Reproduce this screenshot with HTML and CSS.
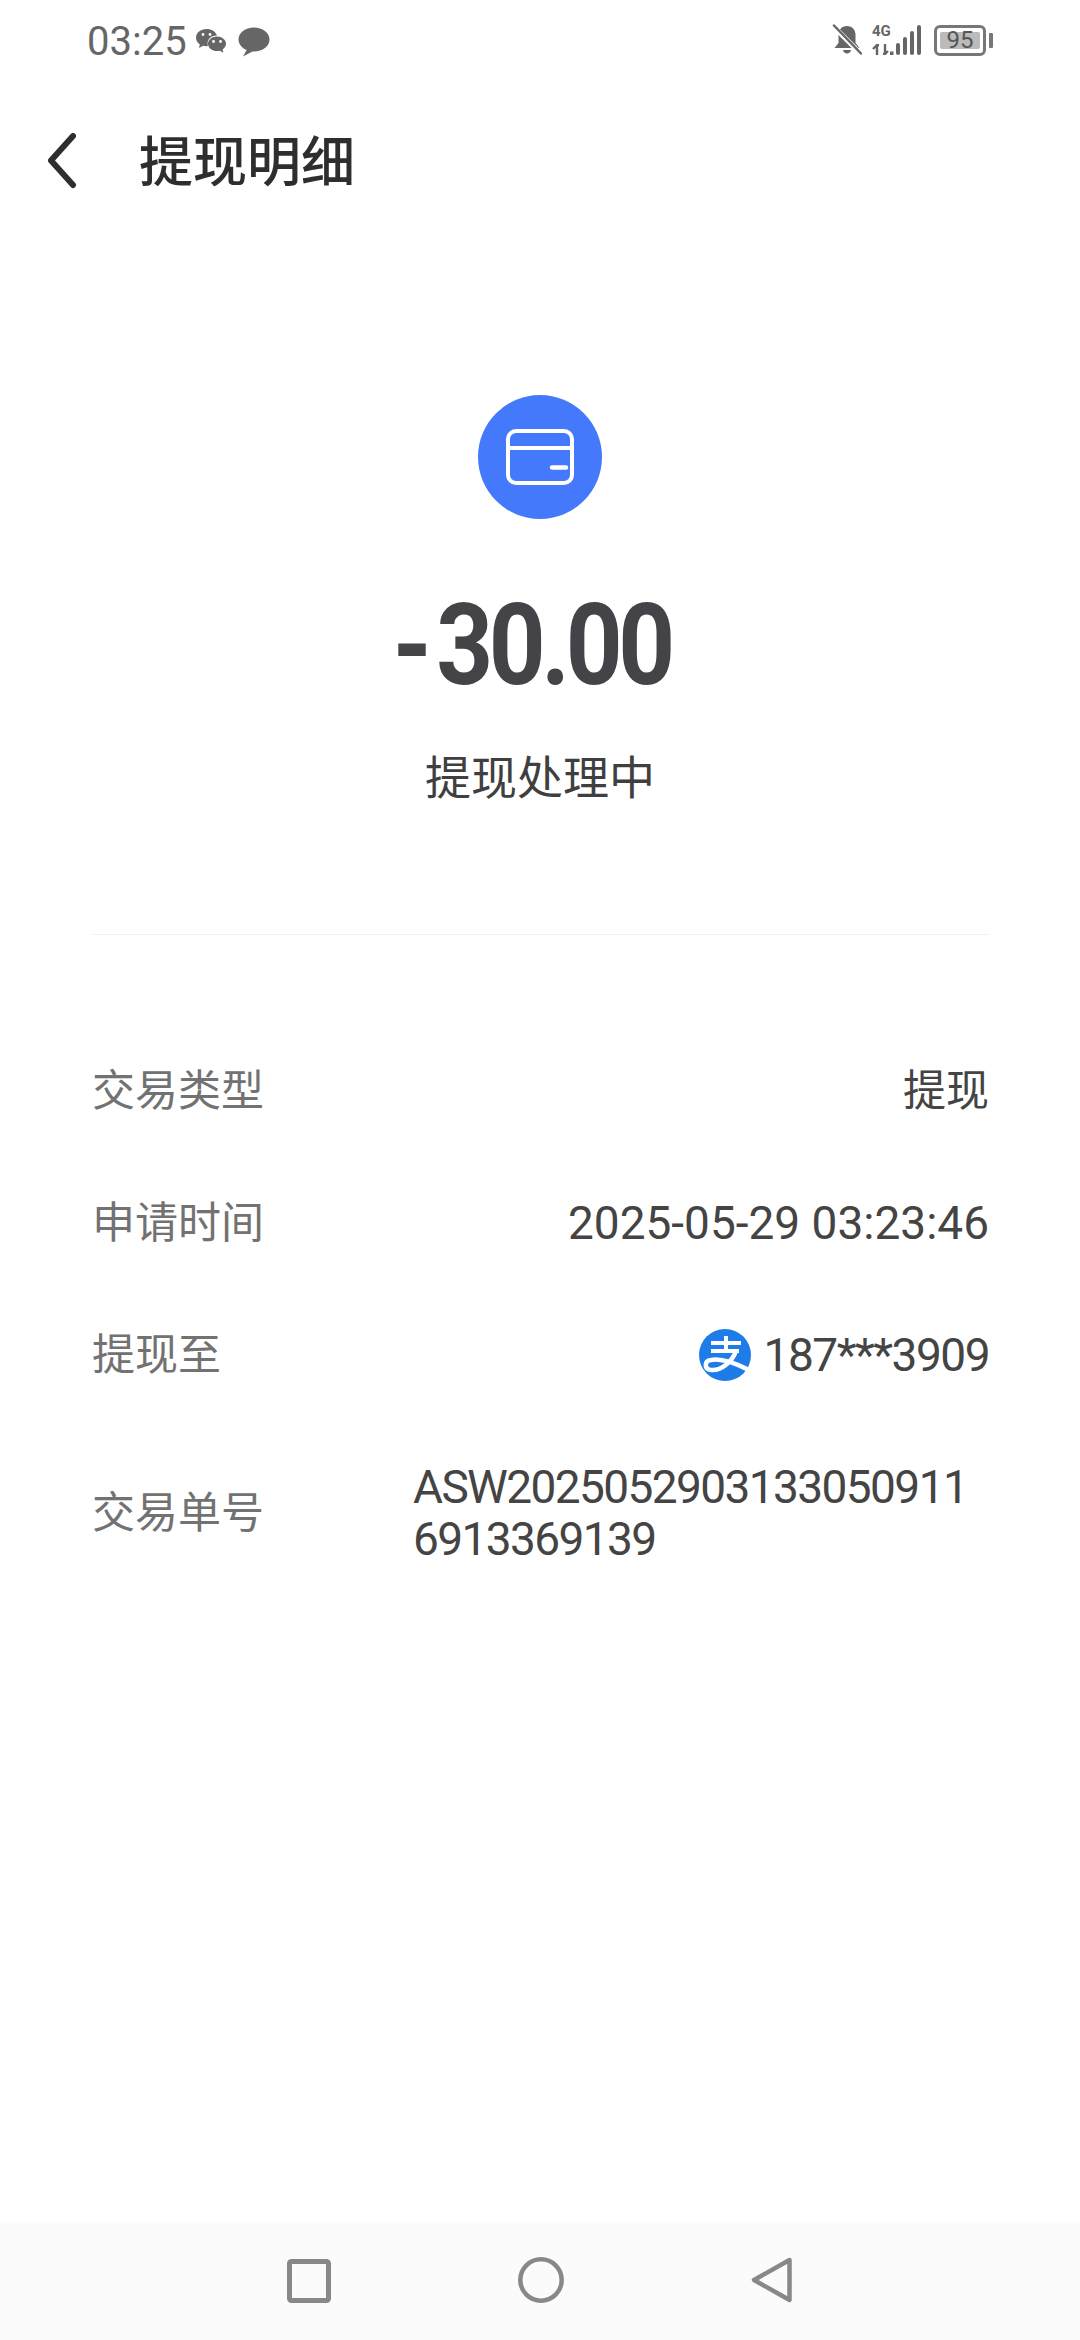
FILE: index.html
```html
<!DOCTYPE html>
<html lang="zh-CN">
<head>
    <meta charset="UTF-8">
    <meta name="viewport" content="width=device-width, initial-scale=1.0">
    <title>提现明细</title>
    <link rel="stylesheet" href="styles.css">
</head>
<body>
    <div class="status-bar">
        <div class="status-left">
            <span class="status-time">03:25</span>
            <svg class="icon-wechat" viewBox="0 0 32 28">
                <path d="M11.5 1C5.7 1 1 4.9 1 9.7c0 2.700 1.500 5.100 3.800 6.700L4 20l4.200-2.200c1 .3 2.100.4 3.300.4.500 0 1-.1 1.500-.1-.3-1-.4-1.900-.4-2.800C12.600 10.600 17 7.300 22 7.500 20.700 3.700 16.500 1 11.500 1z" fill="#666"/>
                <path d="M22 8.500c-5 0-9 3.300-9 7.300s4 7.300 9 7.300c1 0 1.900-.1 2.800-.4l3.600 2-.8-3.300c2.200-1.400 3.400-3.400 3.400-5.600 0-4-4-7.300-9-7.300z" fill="#666"/>
                <circle cx="8" cy="6.500" r="1.400" fill="#fff"/>
                <circle cx="15" cy="6.500" r="1.400" fill="#fff"/>
                <circle cx="18.500" cy="13.500" r="1.400" fill="#fff"/>
                <circle cx="25.500" cy="13.500" r="1.400" fill="#fff"/>
            </svg>
            <svg class="icon-message" viewBox="0 0 32 30">
                <path d="M16 .5C7.400.5.500 5.900.500 12.500c0 4.600 3.300 8.500 8.200 10.500L5 29.500l9.500-5.100c.5 0 1 .1 1.500.1 8.600 0 15.500-5.400 15.500-12S24.600.5 16 .5z" fill="#666"/>
            </svg>
        </div>
        <div class="status-right">
            <svg class="icon-bell" viewBox="0 0 30 32">
                <path d="M15 2c-5.500 0-8.500 4-8.500 9v8l-4 5h25l-4-5v-8c0-5-3-9-8.500-9z" fill="#666"/>
                <path d="M11 26h8c-.3 2.200-2 3.500-4 3.500s-3.700-1.300-4-3.500z" fill="#666"/>
                <path d="M1 2l28 28" stroke="#fff" stroke-width="5"/>
                <path d="M2 1.500l27 28" stroke="#666" stroke-width="2.500" stroke-linecap="round"/>
            </svg>
            <div class="net">
                <span class="net-type">4G</span>
                <svg class="net-arrows" viewBox="0 0 22 11">
                    <path d="M5 11V1L1 5M5 1h2M13 0v10l3-3M13 10h-2" fill="none" stroke="#666" stroke-width="2.400"/>
                    <rect x="18" y="7.500" width="3.500" height="3.500" fill="#666"/>
                </svg>
            </div>
            <div class="signal">
                <span class="bar bar-1"></span>
                <span class="bar bar-2"></span>
                <span class="bar bar-3"></span>
                <span class="bar bar-4"></span>
            </div>
            <div class="battery">
                <div class="battery-body"><span class="battery-level">95</span></div>
                <span class="battery-nub"></span>
            </div>
        </div>
    </div>

    <header class="title-bar">
        <svg class="back" viewBox="0 0 30 56">
            <path d="M26 3L4 27.500 26 52" fill="none" stroke="#2e2e2e" stroke-width="6" stroke-linecap="round" stroke-linejoin="round"/>
        </svg>
        <h1>提现明细</h1>
    </header>

    <section class="summary">
        <div class="summary-icon">
            <svg viewBox="0 0 68 56">
                <rect x="2" y="2" width="64" height="52" rx="8" fill="none" stroke="#fff" stroke-width="4"/>
                <path d="M2 19h64" stroke="#fff" stroke-width="4"/>
                <path d="M46 38.500h14" stroke="#fff" stroke-width="4.500" stroke-linecap="round"/>
            </svg>
        </div>
        <div class="amount"><span class="minus">-</span>30.00</div>
        <div class="state">提现处理中</div>
    </section>

    <div class="divider"></div>

    <section class="details">
        <div class="row">
            <span class="label">交易类型</span>
            <span class="value">提现</span>
        </div>
        <div class="row">
            <span class="label">申请时间</span>
            <span class="value value-date">2025-05-29 03:23:46</span>
        </div>
        <div class="row">
            <span class="label">提现至</span>
            <span class="value value-account">
                <svg class="alipay" viewBox="0 0 52 52">
                    <circle cx="26" cy="26" r="26" fill="#1e7ce8"/>
                    <path d="M12 14h30M27 7v15M12 22h28" fill="none" stroke="#fff" stroke-width="4"/>
                    <path d="M37 22C33 33 22 42 12 41 5 40 5 32 12 31 22 29 38 35 50 41" fill="none" stroke="#fff" stroke-width="4.500"/>
                </svg>
                <span class="account-no">187***3909</span>
            </span>
        </div>
        <div class="row">
            <span class="label">交易单号</span>
            <span class="value value-order">ASW20250529031330509116913369139</span>
        </div>
    </section>

    <nav class="nav-bar">
        <svg class="nav-square" viewBox="0 0 44 44">
            <rect x="2.500" y="2.500" width="39" height="39" rx="2" fill="none" stroke="#888" stroke-width="5"/>
        </svg>
        <svg class="nav-circle" viewBox="0 0 46 46">
            <circle cx="23" cy="23" r="20.700" fill="none" stroke="#888" stroke-width="4.500"/>
        </svg>
        <svg class="nav-back" viewBox="0 0 42 46">
            <path d="M38.500 3L3 23l35.500 20z" fill="none" stroke="#888" stroke-width="4.500" stroke-linejoin="round"/>
        </svg>
    </nav>
</body>
</html>
```

FILE: styles.css
```css
* {
    box-sizing: border-box;
}

body {
    font-family: Roboto, "Noto Sans CJK SC", sans-serif;
    margin: 0;
    width: 1080px;
    height: 2340px;
    background: #fff;
    color: #3a3a3a;
    display: flex;
    flex-direction: column;
    overflow: hidden;
}

.status-bar {
    height: 80px;
    padding: 0 87px 0 87px;
    display: flex;
    align-items: center;
    justify-content: space-between;
}

.status-left,
.status-right {
    display: flex;
    align-items: center;
}

.status-left {
    padding-top: 3px;
}

.status-time {
    font-size: 40px;
    line-height: 42px;
    color: #666;
}

.icon-wechat {
    width: 32px;
    height: 28px;
    margin-left: 8px;
}

.icon-message {
    width: 32px;
    height: 30px;
    margin-left: 11px;
}

.icon-bell {
    width: 30px;
    height: 32px;
}

.net {
    width: 22px;
    margin-left: 10px;
    display: flex;
    flex-direction: column;
    align-items: flex-start;
    gap: 7px;
}

.net-type {
    font-size: 15px;
    line-height: 11px;
    font-weight: 700;
    color: #666;
}

.net-arrows {
    width: 22px;
    height: 11px;
}

.signal {
    display: flex;
    align-items: flex-end;
    gap: 3px;
    height: 30px;
    margin-left: 2px;
}

.bar {
    width: 4px;
    background: #666;
    border-radius: 2px;
}

.bar-1 { height: 12px; }
.bar-2 { height: 18px; }
.bar-3 { height: 24px; }
.bar-4 { height: 30px; }

.battery {
    display: flex;
    align-items: center;
    margin-left: 13px;
}

.battery-body {
    width: 52px;
    height: 31px;
    padding: 4px 3px;
    border: 3px solid #777;
    border-radius: 6px;
}

.battery-level {
    display: block;
    height: 100%;
    background: #bbb;
    border-radius: 2px;
    font-size: 24px;
    line-height: 17px;
    text-align: center;
    color: #555;
}

.battery-nub {
    width: 4px;
    height: 15px;
    margin-left: 3px;
    background: #777;
    border-radius: 1px;
}

.title-bar {
    height: 100px;
    margin-top: 31px;
    padding-left: 47px;
    display: flex;
    align-items: center;
}

.back {
    width: 30px;
    height: 56px;
}

.title-bar h1 {
    margin: 6px 0 0 62px;
    font-size: 54px;
    line-height: 60px;
    font-weight: 500;
    color: #2e2e2e;
}

.summary {
    margin-top: 184px;
    display: flex;
    flex-direction: column;
    align-items: center;
}

.summary-icon {
    width: 124px;
    height: 124px;
    border-radius: 50%;
    background: #4479fb;
    display: flex;
    align-items: center;
    justify-content: center;
}

.summary-icon svg {
    width: 68px;
    height: 56px;
}

.amount {
    margin: 61px 16px 0 0;
    font-size: 114px;
    line-height: 130px;
    font-weight: 700;
    letter-spacing: -5px;
    color: #444448;
    transform: scaleX(.87);
}

.minus {
    margin-right: 10px;
}

.state {
    margin-top: 38px;
    font-size: 46px;
    line-height: 60px;
    color: #3f3f3f;
}

.divider {
    height: 1px;
    margin: 126px 91px 0 92px;
    background: #f0f0f0;
}

.details {
    margin-top: 90px;
    padding: 0 91px 0 92px;
}

.row {
    padding: 40px 0;
    display: flex;
    align-items: center;
    justify-content: space-between;
}

.label {
    font-size: 43px;
    line-height: 52px;
    color: #727272;
}

.value {
    font-size: 43px;
    line-height: 52px;
    color: #444;
}

.value-date {
    font-size: 46px;
}

.value-account {
    display: flex;
    align-items: center;
    gap: 13px;
}

.account-no {
    font-size: 46px;
    letter-spacing: -1.500px;
}

.alipay {
    width: 52px;
    height: 52px;
}

.value-order {
    width: 576px;
    font-size: 46px;
    letter-spacing: -1.600px;
    word-break: break-all;
}

.nav-bar {
    margin-top: auto;
    height: 118px;
    padding-top: 35px;
    background: #fbfbfb;
    display: flex;
    justify-content: center;
    align-items: flex-start;
}

.nav-square {
    width: 44px;
    height: 44px;
    margin-top: 2px;
}

.nav-circle {
    width: 46px;
    height: 46px;
    margin-left: 187px;
}

.nav-back {
    width: 42px;
    height: 46px;
    margin-left: 187px;
}
```
